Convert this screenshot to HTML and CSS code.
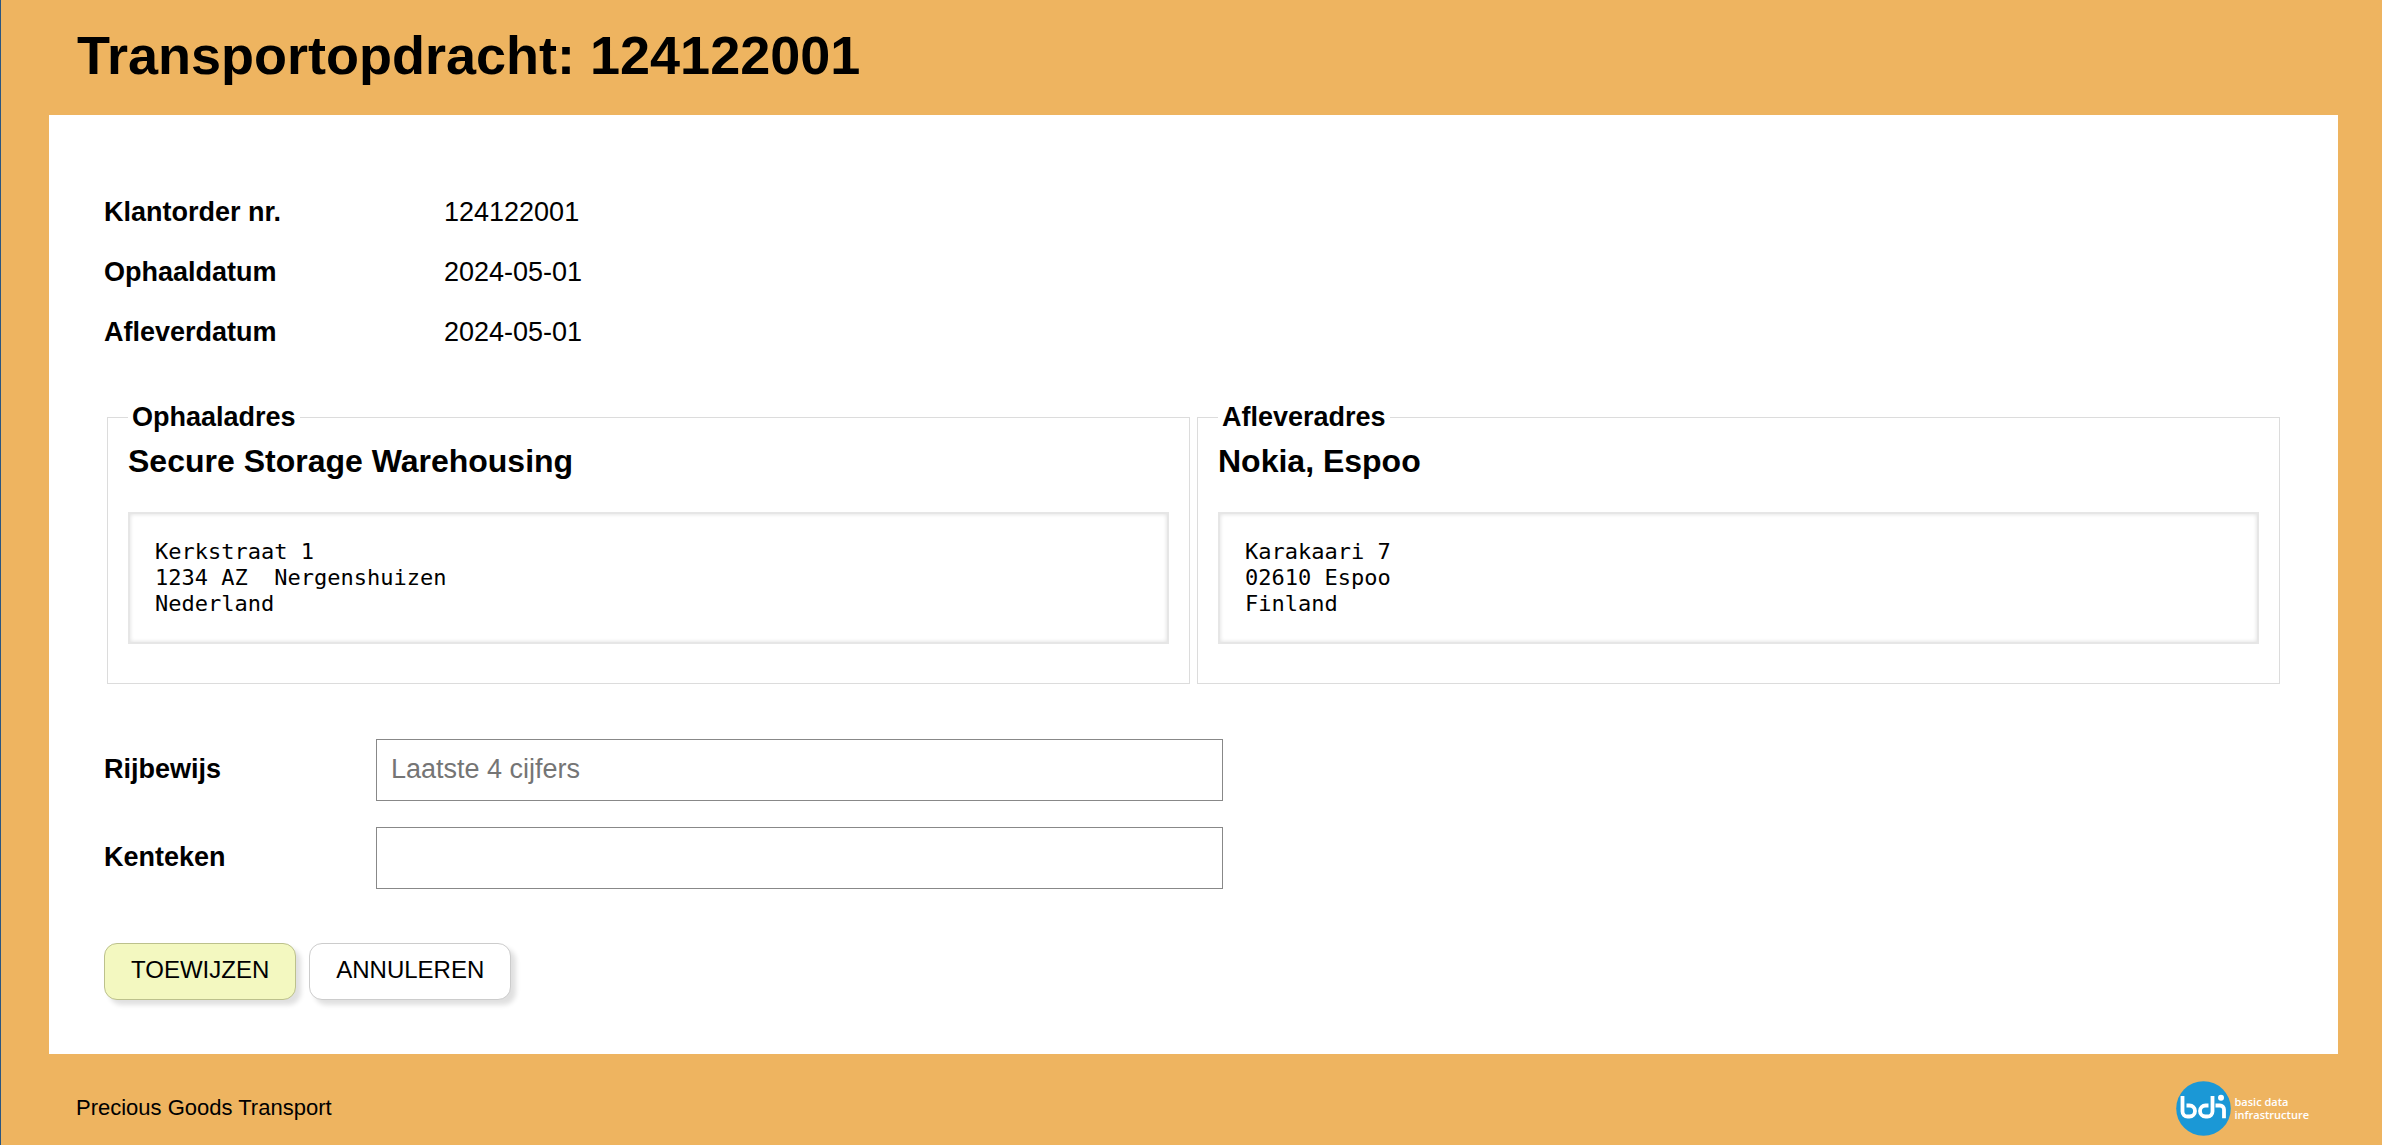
FILE: index.html
```html
<!DOCTYPE html>
<html lang="nl">
<head>
<meta charset="utf-8">
<title>Transportopdracht: 124122001</title>
<link rel="stylesheet" href="styles.css">
</head>
<body>
<header class="page-header">
  <h1 class="page-title">Transportopdracht: 124122001</h1>
</header>
<main class="panel">
  <dl class="details">
    <dt>Klantorder nr.</dt><dd>124122001</dd>
    <dt>Ophaaldatum</dt><dd>2024-05-01</dd>
    <dt>Afleverdatum</dt><dd>2024-05-01</dd>
  </dl>
  <form class="assign-form">
    <div class="addresses">
      <fieldset class="address">
        <legend>Ophaaladres</legend>
        <h2 class="address-name">Secure Storage Warehousing</h2>
        <pre class="address-lines">Kerkstraat 1
1234 AZ  Nergenshuizen
Nederland</pre>
      </fieldset>
      <fieldset class="address">
        <legend>Afleveradres</legend>
        <h2 class="address-name">Nokia, Espoo</h2>
        <pre class="address-lines">Karakaari 7
02610 Espoo
Finland</pre>
      </fieldset>
    </div>
    <div class="fields">
      <div class="field">
        <label for="license">Rijbewijs</label>
        <input id="license" name="license" type="text" placeholder="Laatste 4 cijfers">
      </div>
      <div class="field">
        <label for="plate">Kenteken</label>
        <input id="plate" name="plate" type="text">
      </div>
    </div>
    <div class="actions">
      <button class="button button-primary" type="submit">TOEWIJZEN</button>
      <button class="button" type="button">ANNULEREN</button>
    </div>
  </form>
</main>
<footer class="page-footer">
  <span class="company">Precious Goods Transport</span>
  <div class="logo">
    <svg class="logo-mark" viewBox="0 0 55 55" aria-hidden="true">
      <circle cx="27.5" cy="27.5" r="27.3" fill="#1b98d6"/>
      <g fill="none" stroke="#fff" stroke-width="3.8">
        <path d="M6.500 15v15.500a5 5 0 0 0 5 5h2a5.500 5.500 0 0 0 0-11h-3"/>
        <path d="M36.500 15v15.500a5 5 0 0 1-5 5h-2a5.500 5.500 0 0 1 0-11h3"/>
        <path d="M39.500 24.500h4.500a4 4 0 0 1 4 4v8.800"/>
      </g>
      <circle cx="45" cy="16.800" r="3" fill="#fff"/>
    </svg>
    <div class="logo-text">
      <div>basic data</div>
      <div>infrastructure</div>
    </div>
  </div>
</footer>
</body>
</html>
```
FILE: styles.css
```css
* {
  box-sizing: border-box;
}

body {
  margin: 0;
  min-height: 100vh;
  padding: 0 44px 0 48px;
  border-left: 1px solid #2b5680;
  background: #eeb460;
  color: #000;
  font-family: "Liberation Sans", Arial, sans-serif;
  font-size: 27px;
  line-height: 32px;
}

.page-header {
  padding: 24px 28px 29px;
}

.page-title {
  margin: 0;
  font-size: 54px;
  line-height: 62px;
}

.panel {
  padding: 81px 54px 54px 55px;
  background: #fff;
}

.details {
  display: grid;
  grid-template-columns: 340px 1fr;
  row-gap: 28px;
  margin: 0 0 53px;
}

.details dt {
  font-weight: bold;
}

.details dd {
  margin: 0;
}

.addresses {
  display: grid;
  grid-template-columns: 1fr 1fr;
  gap: 7px;
  margin: 0 4px 55px 3px;
}

.address {
  min-width: 0;
  margin: 0;
  padding: 10px 20px 39px;
  border: 1px solid #dcdcdc;
}

.address legend {
  padding: 0 4px;
  font-weight: bold;
}

.address-name {
  margin: 0 0 33px;
  font-size: 32px;
  line-height: 36px;
}

.address-lines {
  margin: 0;
  padding: 25px;
  border: 2px solid #e6e6e6;
  box-shadow: inset 0 0 4px #dcdcdc;
  font-family: "DejaVu Sans Mono", monospace;
  font-size: 22px;
  line-height: 26px;
}

.fields {
  display: grid;
  gap: 26px;
  margin-bottom: 54px;
}

.field {
  display: grid;
  grid-template-columns: 272px minmax(0, 847px);
  align-items: center;
}

.field label {
  padding-bottom: 2px;
  font-weight: bold;
}

.field input {
  width: 100%;
  height: 62px;
  padding: 0 14px 1px;
  border: 1px solid #888;
  border-radius: 0;
  background: #fff;
  color: #000;
  font: inherit;
}

.field input::placeholder {
  color: #757575;
}

.actions {
  display: flex;
  gap: 13px;
}

.button {
  padding: 12px 26px 16px;
  border: 1px solid #ccc;
  border-radius: 13px;
  background: #fff;
  box-shadow: 5px 5px 5px #e0e0e0;
  color: #000;
  font-family: inherit;
  font-size: 24px;
  line-height: 27px;
}

.button-primary {
  border-color: #bcc18c;
  background: #f3f8c0;
}

.page-footer {
  display: flex;
  align-items: center;
  justify-content: space-between;
  padding: 27px 29px 9px 27px;
  font-size: 22px;
  line-height: 26px;
}

.company {
  padding-bottom: 2px;
}

.logo {
  display: flex;
  align-items: center;
  gap: 4px;
  color: #fff;
}

.logo-mark {
  width: 55px;
  height: 55px;
}

.logo-text {
  padding-bottom: 2px;
  font-family: "Open Sans", sans-serif;
  font-size: 11px;
  font-weight: 600;
  line-height: 13px;
}
```
